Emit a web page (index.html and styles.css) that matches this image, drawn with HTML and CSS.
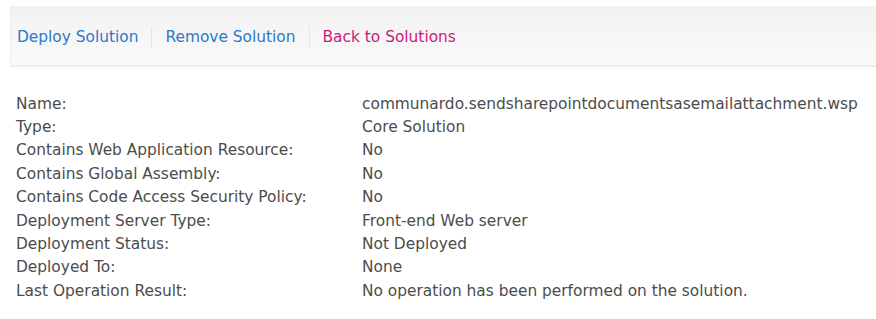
FILE: index.html
```html
<!DOCTYPE html>
<html lang="en">
<head>
<meta charset="UTF-8">
<title>Solution Properties</title>
<link rel="stylesheet" href="styles.css">
</head>
<body>

<div class="toolbar">
    <a href="#" class="action">Deploy Solution</a>
    <span class="sep"></span>
    <a href="#" class="action">Remove Solution</a>
    <span class="sep"></span>
    <a href="#" class="action visited">Back to Solutions</a>
</div>

<table class="props">
    <tr><td class="label">Name:</td><td>communardo.sendsharepointdocumentsasemailattachment.wsp</td></tr>
    <tr><td class="label">Type:</td><td>Core Solution</td></tr>
    <tr><td class="label">Contains Web Application Resource:</td><td>No</td></tr>
    <tr><td class="label">Contains Global Assembly:</td><td>No</td></tr>
    <tr><td class="label">Contains Code Access Security Policy:</td><td>No</td></tr>
    <tr><td class="label">Deployment Server Type:</td><td>Front-end Web server</td></tr>
    <tr><td class="label">Deployment Status:</td><td>Not Deployed</td></tr>
    <tr><td class="label">Deployed To:</td><td>None</td></tr>
    <tr><td class="label">Last Operation Result:</td><td>No operation has been performed on the solution.</td></tr>
</table>

</body>
</html>
```

FILE: styles.css
```css
body {
    font-family: "DejaVu Sans", Verdana, sans-serif;
    font-size: 15.4px;
    color: #4c4c4c;
    background-color: #ffffff;
    margin: 0;
    padding: 6px 0 0 10px;
}

.toolbar {
    display: flex;
    align-items: center;
    height: 56px;
    padding-top: 3px;
    padding-left: 6px;
    background: linear-gradient(#f2f2f2, #fafafa);
    border-left: 1px solid #ececec;
    border-bottom: 2px solid #ededed;
}

.action {
    text-decoration: none;
    color: #2b79c9;
}

.action.visited {
    color: #c81a7e;
}

.sep {
    width: 1px;
    height: 20px;
    background-color: #e3e3e3;
    margin: 0 13px;
}

.props {
    border-collapse: collapse;
    margin-top: 25px;
    margin-left: 6px;
}

.props td {
    padding: 0;
    height: 23.4px;
    vertical-align: middle;
    white-space: nowrap;
}

.props td.label {
    width: 346px;
}
```
